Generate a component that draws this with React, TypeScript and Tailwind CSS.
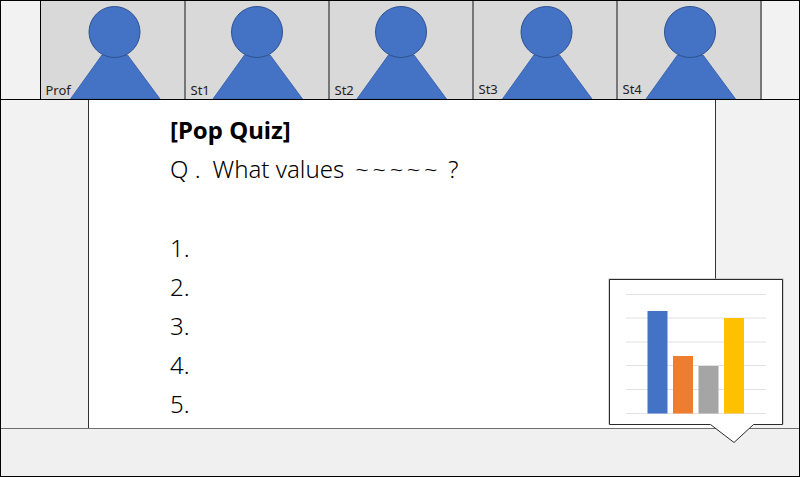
const tiles = [
  { label: "Prof", tileClass: "w-[145px]", labelClass: "bottom-0", personClass: "translate-x-[1.5px]" },
  { label: "St1", tileClass: "w-[144px]", labelClass: "bottom-0", personClass: "" },
  { label: "St2", tileClass: "w-[144px]", labelClass: "bottom-0", personClass: "" },
  { label: "St3", tileClass: "w-[144px]", labelClass: "bottom-px", personClass: "translate-x-[1.5px]" },
  { label: "St4", tileClass: "w-[144px]", labelClass: "bottom-px", personClass: "translate-x-px" },
];

const bars = [
  { x: 647.5, y: 311, h: 102.5, fill: "#4472c4" },
  { x: 673, y: 356, h: 57.5, fill: "#ed7d31" },
  { x: 698.5, y: 366, h: 47.5, fill: "#a5a5a5" },
  { x: 724, y: 318, h: 95.5, fill: "#ffc000" },
];

const gridLines = [294.5, 318, 342, 365.5, 389.5, 413.5];

function Person({ className }: { className: string }) {
  return (
    <svg width="100" height="99" viewBox="0 0 100 99" className={className}>
      <path d="M37.5 55 L6 99 L95.5 99 L63 55 Z" fill="#4472c4" stroke="#3b65b0" strokeWidth="1" />
      <circle cx="50" cy="32" r="25.5" fill="#4472c4" stroke="#2f528f" strokeWidth="1" />
    </svg>
  );
}

function Tile({ label, tileClass, labelClass, personClass }: (typeof tiles)[number]) {
  return (
    <div className={`relative flex shrink-0 items-end justify-center overflow-hidden border-r-2 border-[#777] bg-[#d9d9d9] ${tileClass}`}>
      <Person className={personClass} />
      <span className={`absolute left-[4.5px] text-[13px] leading-[18px] text-[#222] ${labelClass}`}>{label}</span>
    </div>
  );
}

function ChartCallout() {
  return (
    <svg width="190" height="175" viewBox="600 275 190 175" className="absolute left-[599px] top-[274px]">
      <path d="M609.5 424.5 V279.5 H782.5 V424.5" fill="none" stroke="#b0b0b0" strokeWidth="2" />
      <path
        d="M609.5 424.5 V279.5 H782.5 V424.5 H753.5 L734 442.5 L710.5 424.5 Z"
        fill="#ffffff"
        stroke="#2a2a2a"
        strokeWidth="1"
      />
      {gridLines.map((y) => (
        <line key={y} x1="626" x2="766" y1={y} y2={y} stroke="#e2e2e2" strokeWidth="1" />
      ))}
      {bars.map((bar) => (
        <rect key={bar.x} x={bar.x} y={bar.y} width="20" height={bar.h} fill={bar.fill} />
      ))}
    </svg>
  );
}

export default function App() {
  return (
    <div className="relative flex h-[477px] w-[800px] flex-col overflow-hidden border border-black bg-[#f2f2f2] font-['Noto_Sans','Noto_Sans_CJK_KR',sans-serif] text-black">
      <div className="flex h-[99px] shrink-0 border-b border-black pl-[39px]">
        <div className="flex border-l border-black">
          {tiles.map((tile) => (
            <Tile key={tile.label} {...tile} />
          ))}
        </div>
      </div>
      <div className="flex min-h-0 flex-1">
        <div className="ml-[87px] w-[628px] border-x border-[#333] bg-white pl-[81px] pt-[10px] text-[24px] font-light leading-[39.2px]">
          <p className="font-bold">[Pop Quiz]</p>
          <p>
            Q .<span className="ml-[12px]">What values</span>
            <span className="ml-[11px] tracking-[3.5px]">~~~~~</span>
            <span className="ml-[7px]">?</span>
          </p>
          <p>&nbsp;</p>
          <p>1.</p>
          <p>2.</p>
          <p>3.</p>
          <p>4.</p>
          <p>5.</p>
        </div>
      </div>
      <div className="h-[48px] shrink-0 border-t border-[#6f6f6f] bg-[#f0f0f0]" />
      <ChartCallout />
    </div>
  );
}
